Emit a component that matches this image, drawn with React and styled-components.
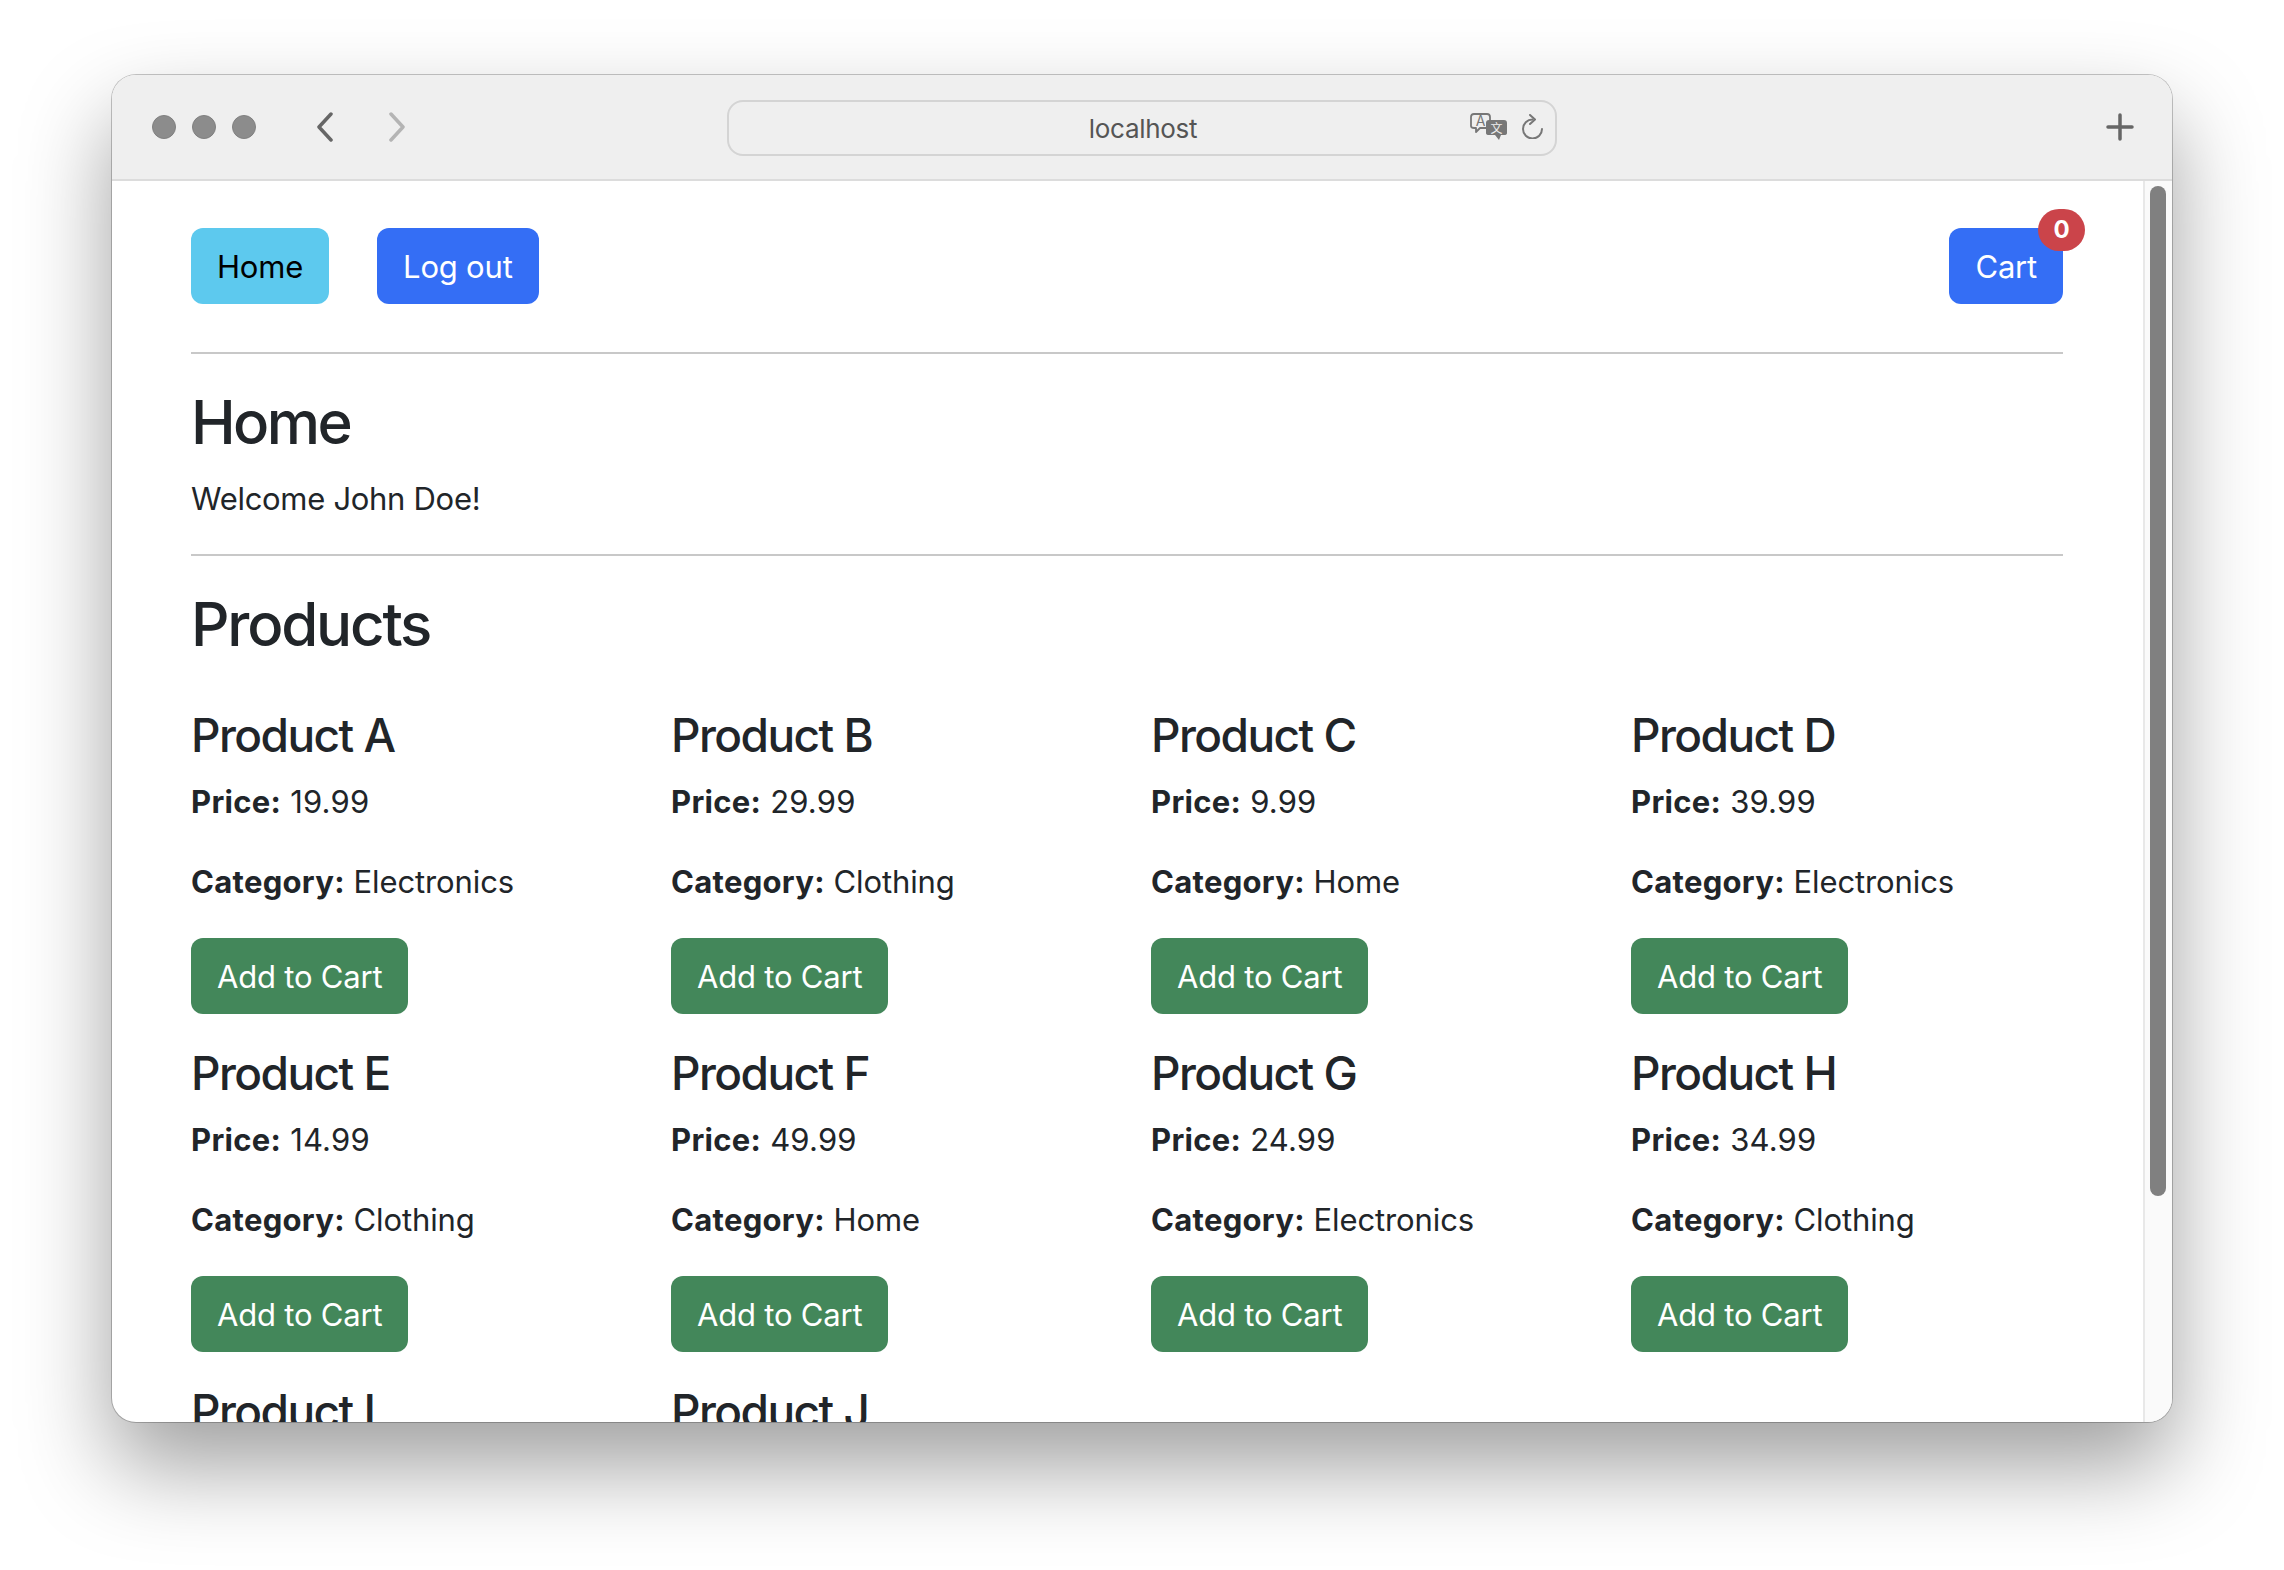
import React from "react";
import styled, { createGlobalStyle } from "styled-components";

const GlobalStyle = createGlobalStyle`
    html, body {
        margin: 0;
        background: #fff;
    }
    * {
        box-sizing: border-box;
    }
`;

const Page = styled.div`
    width: 2284px;
    height: 1570px;
    padding: 75px 112px 148px;
    overflow: hidden;
    font-family: Inter, "Noto Sans", sans-serif;
    color: #212529;
`;

const Window = styled.div`
    height: 100%;
    display: flex;
    flex-direction: column;
    background: #fff;
    border-radius: 24px;
    overflow: hidden;
    box-shadow: 0 0 0 1px rgba(0, 0, 0, 0.22), 0 44px 90px rgba(0, 0, 0, 0.38);
`;

const TitleBar = styled.div`
    flex: none;
    height: 106px;
    display: grid;
    grid-template-columns: 1fr 830px 1fr;
    align-items: center;
    background: #efefef;
    border-bottom: 2px solid #dcdcdc;
`;

const LeftControls = styled.div`
    display: flex;
    align-items: center;
    padding-left: 40px;
`;

const Light = styled.span`
    width: 24px;
    height: 24px;
    margin-right: 16px;
    border-radius: 50%;
    background: #8c8c8c;
    border: 1px solid #808080;
`;

const NavArrow = styled.svg`
    display: block;
    width: 18px;
    height: 30px;
    margin-left: ${(p) => p.$gap}px;
    fill: none;
    stroke: ${(p) => p.$color};
    stroke-width: 3.5;
    stroke-linecap: round;
    stroke-linejoin: round;
`;

const UrlBar = styled.div`
    height: 56px;
    margin-top: 1px;
    display: grid;
    grid-template-columns: 1fr auto 1fr;
    align-items: center;
    border: 2px solid #d4d4d4;
    border-radius: 16px;
`;

const UrlText = styled.span`
    grid-column: 2;
    padding: 1px 0 0 2px;
    font-size: 26px;
    letter-spacing: -0.3px;
    color: #555;
`;

const UrlIcons = styled.div`
    grid-column: 3;
    display: flex;
    align-items: center;
    justify-content: flex-end;
    gap: 15px;
    padding-right: 12px;
    margin-bottom: 3px;
`;

const TranslateSvg = styled.svg`
    display: block;
    width: 37px;
    height: 27px;
`;

const ReloadSvg = styled.svg`
    display: block;
    width: 21px;
    height: 25px;
    fill: none;
    stroke: #777;
    stroke-width: 2;
    stroke-linecap: round;
    stroke-linejoin: round;
`;

const RightControls = styled.div`
    display: flex;
    justify-content: flex-end;
    padding-right: 38px;
`;

const PlusSvg = styled.svg`
    display: block;
    width: 28px;
    height: 28px;
    stroke: #666;
    stroke-width: 3.5;
    stroke-linecap: round;
`;

const Body = styled.div`
    flex: 1;
    min-height: 0;
    display: flex;
`;

const Viewport = styled.main`
    flex: 1;
    min-width: 0;
    padding: 47px 80px 0 79px;
    overflow: hidden;
`;

const ScrollTrack = styled.div`
    flex: none;
    width: 29px;
    padding: 5px 6px 0 5px;
    background: #fafafa;
    border-left: 2px solid #e8e8e8;
`;

const ScrollThumb = styled.div`
    width: 16px;
    height: 1010px;
    border-radius: 8px;
    background: #808080;
`;

const Nav = styled.nav`
    display: flex;
    gap: 48px;
`;

const Button = styled.button`
    display: block;
    height: 76px;
    padding: 1px 26px 0;
    border: none;
    border-radius: 12px;
    font-family: inherit;
    font-size: 31px;
    line-height: 48px;
    letter-spacing: -0.2px;
    color: ${(p) => p.$text || "#fff"};
    background: ${(p) => p.$bg};
`;

const CartButton = styled(Button)`
    position: relative;
    margin-left: auto;
`;

const Badge = styled.span`
    position: absolute;
    top: -19px;
    right: -22px;
    width: 47px;
    height: 42px;
    display: flex;
    align-items: center;
    justify-content: center;
    border-radius: 21px;
    background: #cb444a;
    color: #fff;
    font-size: 24px;
    font-weight: 700;
`;

const Rule = styled.hr`
    height: 2px;
    margin: ${(p) => p.$top}px 0 32px;
    border: none;
    background: #c8c8c8;
`;

const SectionTitle = styled.h2`
    margin: 0 0 16px;
    font-size: 60px;
    line-height: 73px;
    font-weight: 500;
    letter-spacing: ${(p) => p.$spacing}px;
`;

const Text = styled.p`
    margin: 0 0 32px;
    font-size: 31px;
    line-height: 48px;
    letter-spacing: ${(p) => p.$spacing ?? -0.1}px;
`;

const Label = styled.b`
    letter-spacing: 0.3px;
`;

const ProductGrid = styled.div`
    display: grid;
    grid-template-columns: repeat(4, 1fr);
    column-gap: 48px;
    row-gap: 31px;
    margin-top: 46px;
`;

const ProductName = styled.h4`
    margin: 0 0 15px;
    font-size: 46px;
    line-height: 56px;
    font-weight: 500;
    letter-spacing: -1.55px;
`;

const products = [
    { name: "Product A", price: "19.99", category: "Electronics" },
    { name: "Product B", price: "29.99", category: "Clothing" },
    { name: "Product C", price: "9.99", category: "Home" },
    { name: "Product D", price: "39.99", category: "Electronics" },
    { name: "Product E", price: "14.99", category: "Clothing" },
    { name: "Product F", price: "49.99", category: "Home" },
    { name: "Product G", price: "24.99", category: "Electronics" },
    { name: "Product H", price: "34.99", category: "Clothing" },
    { name: "Product I" },
    { name: "Product J" },
];

function ProductCard(props) {
    return <article>
        <ProductName>{props.name}</ProductName>
        {props.price && <>
            <Text $spacing={0.2}><Label>Price:</Label> {props.price}</Text>
            <Text><Label>Category:</Label> {props.category}</Text>
            <Button $bg="#43875a">Add to Cart</Button>
        </>}
    </article>;
}

export default function App() {
    return <Page>
        <GlobalStyle />
        <Window>
            <TitleBar>
                <LeftControls>
                    <Light />
                    <Light />
                    <Light />
                    <NavArrow $gap={44} $color="#666" viewBox="0 0 18 30">
                        <path d="M15 2 L3 15 L15 28" />
                    </NavArrow>
                    <NavArrow $gap={54} $color="#b4b4b4" viewBox="0 0 18 30">
                        <path d="M3 2 L15 15 L3 28" />
                    </NavArrow>
                </LeftControls>
                <UrlBar>
                    <UrlText>localhost</UrlText>
                    <UrlIcons>
                        <TranslateSvg viewBox="0 0 37 27">
                            <path d="M4 1 H17 Q20 1 20 4 V13 Q20 15 17 15 H10 L6 19 V15 H4 Q1 15 1 13 V4 Q1 1 4 1 Z" fill="#efefef" stroke="#777" strokeWidth="1.8" strokeLinejoin="round" />
                            <text x="10.5" y="12.5" textAnchor="middle" fontSize="14" fontFamily="Inter, sans-serif" fill="#777">A</text>
                            <path d="M19 7 H34 Q37 7 37 10 V20 Q37 22 34 22 H31 L29 27 L25 22 H19 Q16 22 16 20 V10 Q16 7 19 7 Z" fill="#777" />
                            <text x="26.5" y="19.5" textAnchor="middle" fontSize="12" fontFamily="'Noto Sans CJK SC', sans-serif" fill="#efefef">文</text>
                        </TranslateSvg>
                        <ReloadSvg viewBox="0 0 21 25">
                            <path d="M10.5 5.5 A9.5 9.5 0 1 0 20 15" />
                            <path d="M8 1 L13 5.5 L8 10" />
                        </ReloadSvg>
                    </UrlIcons>
                </UrlBar>
                <RightControls>
                    <PlusSvg viewBox="0 0 28 28">
                        <path d="M14 2 V26 M2 14 H26" />
                    </PlusSvg>
                </RightControls>
            </TitleBar>
            <Body>
                <Viewport>
                    <Nav>
                        <Button $bg="#5dc9ee" $text="#000">Home</Button>
                        <Button $bg="#346ef5">Log out</Button>
                        <CartButton $bg="#346ef5">
                            Cart
                            <Badge>0</Badge>
                        </CartButton>
                    </Nav>
                    <Rule $top={48} />
                    <SectionTitle $spacing={-2.6}>Home</SectionTitle>
                    <Text $spacing={-0.3}>Welcome John Doe!</Text>
                    <Rule $top={-1} />
                    <SectionTitle $spacing={-2.2}>Products</SectionTitle>
                    <ProductGrid>
                        {products.map((p) => <ProductCard key={p.name} {...p} />)}
                    </ProductGrid>
                </Viewport>
                <ScrollTrack>
                    <ScrollThumb />
                </ScrollTrack>
            </Body>
        </Window>
    </Page>;
}
